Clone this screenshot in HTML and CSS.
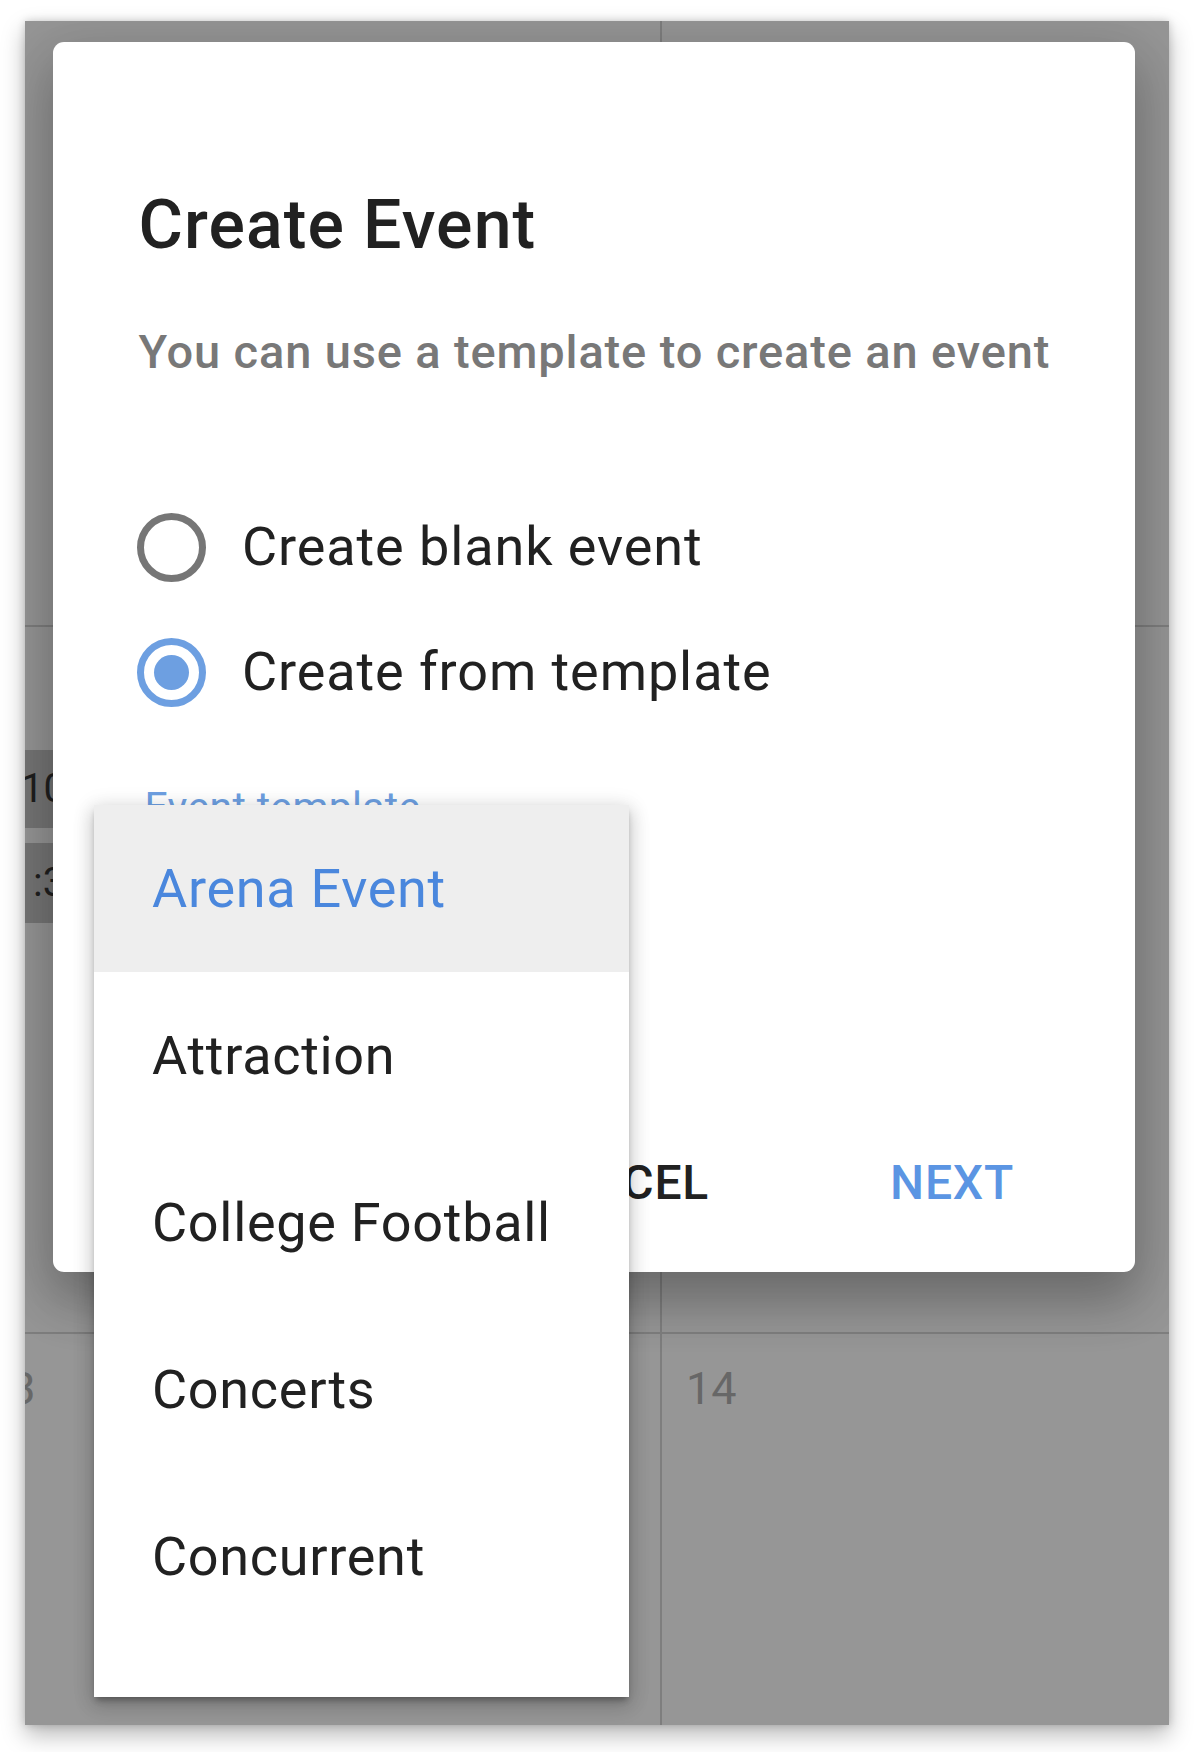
FILE: index.html
```html
<!DOCTYPE html>
<html lang="en">
<head>
<meta charset="utf-8">
<title>Create Event</title>
<link rel="stylesheet" href="styles.css">
</head>
<body>
<div class="window">
  <div class="calendar">
    <div class="cell row-head col-a"></div>
    <div class="cell row-head col-b"></div>
    <div class="cell row-mid col-a">
      <div class="cal-event"><span class="cal-event-text first">10:00</span></div>
      <div class="cal-event"><span class="cal-event-text second">:30 PM</span></div>
    </div>
    <div class="cell row-mid col-b"></div>
    <div class="cell row-low col-a"><span class="daynum daynum-cut">13</span></div>
    <div class="cell row-low col-b"><span class="daynum">14</span></div>
  </div>

  <div class="dialog">
    <h2 class="dialog-title">Create Event</h2>
    <p class="dialog-text">You can use a template to create an event</p>
    <div class="radio-group">
      <div class="radio-row">
        <span class="radio"></span>
        <span class="radio-label">Create blank event</span>
      </div>
      <div class="radio-row">
        <span class="radio radio-checked"></span>
        <span class="radio-label">Create from template</span>
      </div>
    </div>
    <div class="field">
      <span class="field-label">Event template</span>
    </div>
    <div class="actions">
      <button class="btn btn-cancel">CANCEL</button>
      <button class="btn btn-next">NEXT</button>
    </div>
  </div>

  <ul class="menu">
    <li class="menu-item menu-item-active">Arena Event</li>
    <li class="menu-item">Attraction</li>
    <li class="menu-item">College Football</li>
    <li class="menu-item">Concerts</li>
    <li class="menu-item">Concurrent</li>
  </ul>
</div>
</body>
</html>
```

FILE: styles.css
```css
* {
  box-sizing: border-box;
}

html, body {
  margin: 0;
  background: #ffffff;
}

body {
  padding: 21px 0 0 25px;
  font-family: Roboto, "Liberation Sans", Arial, sans-serif;
  width: 1194px;
  height: 1752px;
  overflow: hidden;
}

.window {
  position: relative;
  width: 1144px;
  height: 1704px;
  overflow: hidden;
  background: #969696;
  box-shadow: 0 10px 22px rgba(0, 0, 0, 0.28), 0 0 8px rgba(0, 0, 0, 0.18);
}

/* calendar behind the overlay */
.calendar {
  display: grid;
  grid-template-columns: 637px 1fr;
  grid-template-rows: 606px 707px 1fr;
  height: 100%;
}

.cell {
  border-bottom: 2px solid #7e7e7e;
}

.col-a {
  border-right: 2px solid #7e7e7e;
}

.row-low {
  border-bottom: 0;
}

.row-mid.col-a {
  padding-top: 123px;
  display: flex;
  flex-direction: column;
  gap: 15px;
}

.cal-event {
  height: 78px;
  background: #767676;
  font-size: 40px;
  line-height: 78px;
  color: #1f1f1f;
  white-space: nowrap;
  overflow: hidden;
}

.cal-event + .cal-event {
  height: 80px;
  line-height: 80px;
}

.cal-event-text {
  display: block;
}

.cal-event-text.first {
  text-indent: -4px;
}

.cal-event-text.second {
  text-indent: 8px;
}

.daynum {
  display: block;
  padding: 28px 0 0 24px;
  font-size: 45px;
  line-height: 53px;
  color: #676767;
  white-space: nowrap;
}

.daynum-cut {
  padding-left: 0;
  text-indent: -40px;
}

/* dialog */
.dialog {
  position: absolute;
  left: 27.5px;
  top: 20.7px;
  width: 1082.5px;
  height: 1230px;
  background: #ffffff;
  border-radius: 11px;
  padding: 143px 0 0 86px;
  display: flex;
  flex-direction: column;
  box-shadow: 0 30px 50px rgba(0, 0, 0, 0.22), 0 10px 60px 14px rgba(0, 0, 0, 0.1);
}

.dialog-title {
  margin: 0;
  font-size: 68px;
  line-height: 80px;
  font-weight: 500;
  letter-spacing: 1.1px;
  color: #212121;
}

.dialog-text {
  margin: 59px 0 0;
  font-size: 47px;
  line-height: 56px;
  font-weight: 500;
  letter-spacing: 0.85px;
  color: #787878;
}

.radio-group {
  margin-top: 105px;
  display: flex;
  flex-direction: column;
}

.radio-row {
  height: 125px;
  display: flex;
  align-items: center;
  gap: 36px;
  margin-left: -1.5px;
}

.radio {
  flex: none;
  width: 69px;
  height: 69px;
  border: 7px solid #767676;
  border-radius: 50%;
  display: grid;
  place-items: center;
}

.radio-checked {
  border-color: #6d9fe1;
}

.radio-checked::after {
  content: "";
  width: 35px;
  height: 35px;
  border-radius: 50%;
  background: #6d9fe1;
}

.radio-label {
  font-size: 54px;
  line-height: 64px;
  letter-spacing: 0.9px;
  color: #212121;
}

.field {
  margin-top: 48.5px;
  padding-left: 6px;
}

.field-label {
  font-size: 41px;
  line-height: 48px;
  letter-spacing: 0.3px;
  color: #6d9fe1;
}

.actions {
  margin-top: auto;
  display: flex;
  justify-content: flex-end;
  gap: 181px;
  padding: 0 121px 61px 0;
}

.btn {
  background: none;
  border: 0;
  padding: 0;
  margin: 0;
  font-family: Roboto, "Liberation Sans", Arial, sans-serif;
  font-size: 48px;
  line-height: 56px;
  font-weight: 500;
  letter-spacing: 0.8px;
  cursor: pointer;
}

.btn-cancel {
  color: #212121;
}

.btn-next {
  color: #5b95e3;
}

/* dropdown menu */
.menu {
  position: absolute;
  left: 69.3px;
  top: 784px;
  width: 534.5px;
  margin: 0;
  padding: 0 0 57px;
  list-style: none;
  background: #ffffff;
  box-shadow: 0 5px 6px -2px rgba(0, 0, 0, 0.3), 0 8px 18px 2px rgba(0, 0, 0, 0.14), 0 3px 20px 2px rgba(0, 0, 0, 0.1);
}

.menu-item {
  height: 167px;
  display: flex;
  align-items: center;
  padding-left: 57.7px;
  font-size: 54px;
  line-height: 64px;
  letter-spacing: 0.7px;
  color: #212121;
}

.menu-item-active {
  background: #eeeeee;
  color: #4a87dd;
}
```
